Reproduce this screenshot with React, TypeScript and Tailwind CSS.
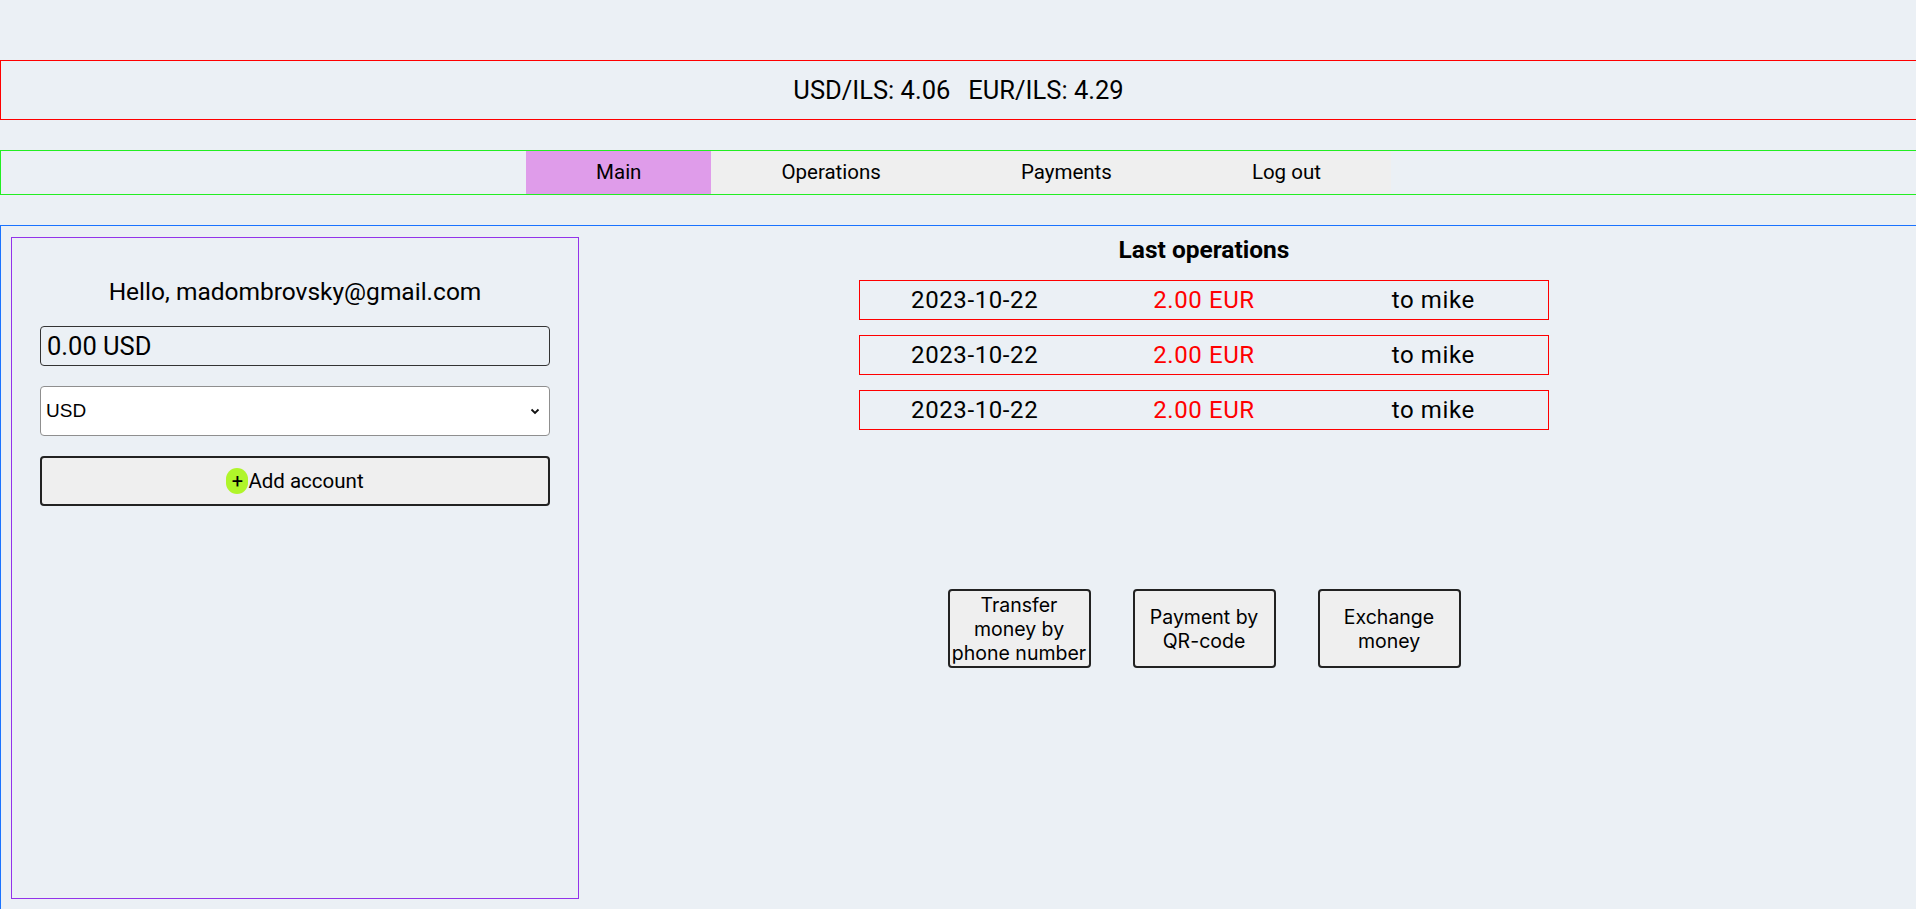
import React from "react";

const rubik = { fontFamily: "Roboto, 'Noto Sans', sans-serif" };

export default function App() {
  const ops = [0, 1, 2];
  return (
    <div className="min-h-[909px] w-full overflow-hidden bg-[#ebf0f5] pt-[60px] text-black" style={rubik}>
      <div className="flex h-[60px] items-center justify-center border-y border-l border-[#ff0000] text-[25.5px]">
        <span>USD/ILS: 4.06</span>
        <span className="ml-[18px]">EUR/ILS: 4.29</span>
      </div>
      <div className="mt-[30px] flex h-[45px] justify-center border-y border-l border-[#22ee22]">
        {["Main", "Operations", "Payments", "Log out"].map((t, i) => (
          <div
            key={t}
            className={`flex items-center px-[70px] text-[20.5px] ${i === 0 ? "bg-[#df9cea]" : "bg-[#efefef]"}`}
          >
            {t}
          </div>
        ))}
      </div>
      <div className="mt-[30px] flex h-[700px] border-t border-l border-[#1a73ff] pl-[10px] pt-[11px]">
        <div className="flex h-[662px] w-[568px] shrink-0 flex-col border border-[#9333ea] px-[28px] pt-[40px]">
          <div className="text-center text-[24.5px] leading-[28px]">Hello, madombrovsky@gmail.com</div>
          <div className="mt-[20px] flex h-[40px] items-center rounded-[4px] border border-[#333] px-[6px] text-[25.5px]">
            0.00 USD
          </div>
          <div
            className="mt-[20px] flex h-[50px] items-center justify-between rounded-[4px] border border-[#8f8f8f] bg-white pl-[5px] pr-[8px] text-[19px]"
            style={{ fontFamily: "'Liberation Sans', Arial, sans-serif" }}
          >
            <span>USD</span>
            <svg width="12" height="12" viewBox="0 0 12 12">
              <path d="M2.5 4.5 L6 8 L9.5 4.5" fill="none" stroke="#111" strokeWidth="1.8" />
            </svg>
          </div>
          <div className="mt-[20px] flex h-[50px] items-center justify-center rounded-[4px] border-2 border-[#222] bg-[#efefef] text-[20.5px]">
            <span className="flex h-[26px] w-[22px] items-center justify-center rounded-full bg-[#b0f52a] text-[20px] leading-none">
              +
            </span>
            <span>Add account</span>
          </div>
        </div>
        <div className="mr-[87px] flex flex-1 flex-col items-center">
          <div className="text-[24.5px] font-bold leading-[26px]">Last operations</div>
          <div className="mt-[17px] flex flex-col gap-[15px]">
            {ops.map((i) => (
              <div key={i} className="flex h-[40px] w-[690px] items-center border border-[#ff0000] text-[24px] tracking-[0.6px]">
                <div className="w-[230px] text-center">2023-10-22</div>
                <div className="w-[230px] text-center text-[#ff0000]">2.00 EUR</div>
                <div className="w-[230px] text-center">to mike</div>
              </div>
            ))}
          </div>
          <div className="mt-[159px] flex gap-[42px]" style={{ fontFamily: "Inter, sans-serif" }}>
            {["Transfer money by phone number", "Payment by QR-code", "Exchange money"].map((t) => (
              <div
                key={t}
                className="flex h-[79px] w-[143px] items-center justify-center rounded-[4px] border-2 border-[#222] bg-[#efefef] px-[1px] text-center text-[19.5px] leading-[24px]"
              >
                {t}
              </div>
            ))}
          </div>
        </div>
      </div>
    </div>
  );
}
